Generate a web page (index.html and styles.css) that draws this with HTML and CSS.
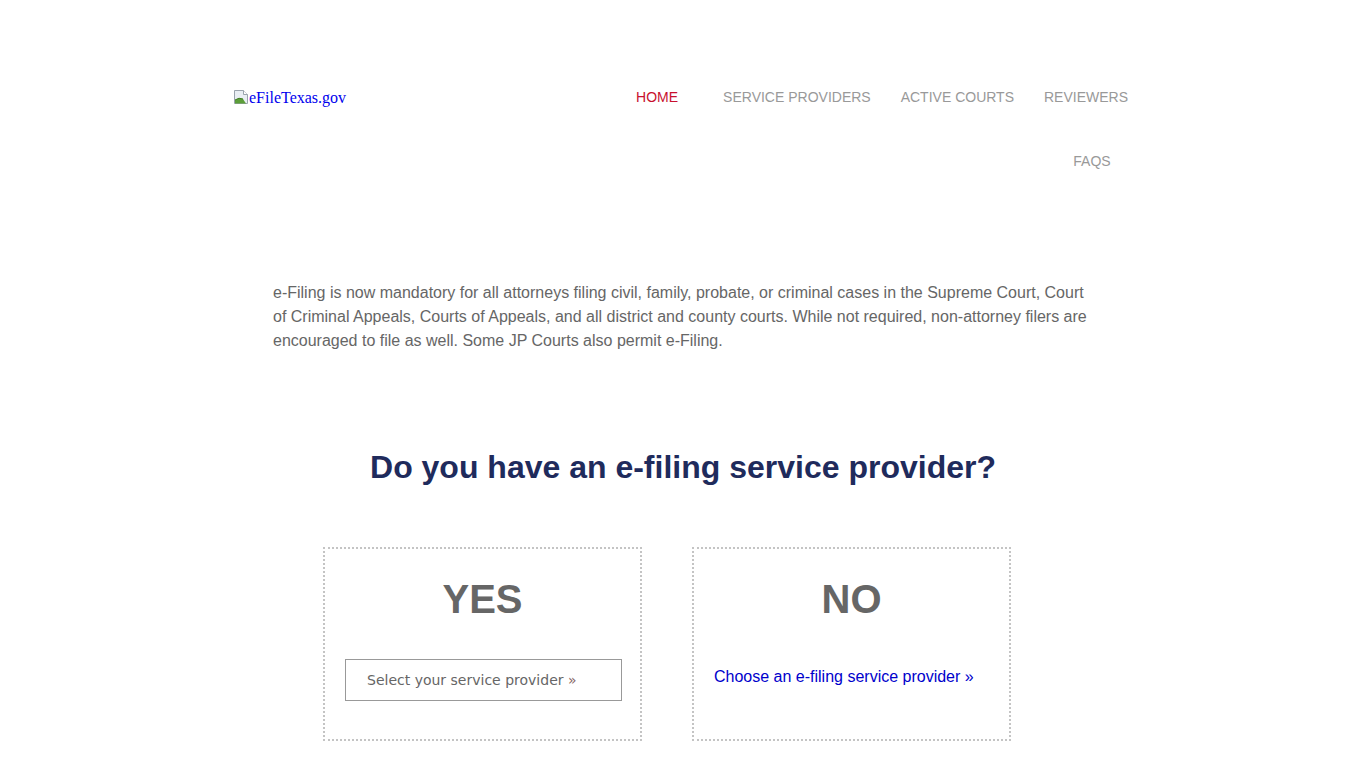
FILE: index.html
```html
<!DOCTYPE html>
<html lang="en">
<head>
<meta charset="utf-8">
<title>eFileTexas.gov</title>
<link rel="stylesheet" href="styles.css">
</head>
<body>
<div class="page">
  <header class="header">
    <a class="logo" href="#">
      <svg class="broken" width="16" height="16" viewBox="0 0 16 16" aria-hidden="true">
        <path d="M1.5 1.5h9l4 4v9h-13z" fill="#e9eef3" stroke="#9aa3ad"/>
        <path d="M10.5 1.5v4h4" fill="#fff" stroke="#9aa3ad"/>
        <path d="M2 14.5 L2 11 Q6 8 10 10 L13 14.5 Z" fill="#5c9e3a"/>
        <path d="M2 11 Q6 8 10 10" fill="none" stroke="#3f7d22"/>
      </svg><span>eFileTexas.gov</span>
    </a>
    <nav class="nav">
      <a class="nav-item active" href="#">HOME</a>
      <a class="nav-item" href="#">SERVICE PROVIDERS</a>
      <a class="nav-item" href="#">ACTIVE COURTS</a>
      <a class="nav-item" href="#">REVIEWERS</a>
      <a class="nav-item" href="#">FAQS</a>
    </nav>
  </header>

  <p class="intro">e-Filing is now mandatory for all attorneys filing civil, family, probate, or criminal cases in the Supreme Court, Court of Criminal Appeals, Courts of Appeals, and all district and county courts. While not required, non-attorney filers are encouraged to file as well. Some JP Courts also permit e-Filing.</p>

  <h1 class="question">Do you have an e-filing service provider?</h1>

  <div class="choices">
    <div class="choice">
      <h2 class="choice-title">YES</h2>
      <a class="select-btn" href="#">Select your service provider <span class="raquo">&raquo;</span></a>
    </div>
    <div class="choice">
      <h2 class="choice-title">NO</h2>
      <a class="choose-link" href="#">Choose an e-filing service provider &raquo;</a>
    </div>
  </div>
</div>
</body>
</html>
```

FILE: styles.css
```css
html, body {
  margin: 0;
  padding: 0;
  background: #fff;
}

.page {
  width: 940px;
  margin: 0 auto;
  font-family: "Liberation Sans", Arial, sans-serif;
}

.header {
  display: flex;
  justify-content: space-between;
  align-items: flex-start;
  margin-top: 65px;
  padding: 0 10px 0 20px;
}

.logo {
  display: flex;
  align-items: center;
  height: 66px;
  font-family: "Liberation Serif", "Times New Roman", serif;
  font-size: 16px;
  color: #0000ee;
  text-decoration: none;
}

.broken {
  display: block;
  margin-top: -2px;
}

.nav {
  display: flex;
  flex-wrap: wrap;
  justify-content: flex-end;
  width: 540px;
}

.nav-item {
  box-sizing: border-box;
  min-width: 102px;
  padding: 0 15px;
  line-height: 64px;
  text-align: center;
  font-size: 14px;
  color: #999;
  text-decoration: none;
}

.nav-item.active {
  color: #c8102e;
}

.intro {
  margin: 88px 60px 0;
  font-size: 16px;
  line-height: 24px;
  color: #666;
}

.question {
  margin: 94px 0 0;
  text-align: center;
  font-size: 32px;
  line-height: 40px;
  font-weight: bold;
  color: #1f2b5c;
}

.choices {
  display: flex;
  gap: 50px;
  margin-top: 60px;
  padding-left: 110px;
}

.choice {
  box-sizing: border-box;
  width: 319px;
  border: 2px dotted #c4c4c4;
  padding: 30px 20px 38px;
}

.choice-title {
  margin: 0;
  text-align: center;
  font-size: 40px;
  line-height: 40px;
  font-weight: bold;
  color: #666;
}

.select-btn {
  display: block;
  box-sizing: border-box;
  width: 277px;
  height: 42px;
  margin-top: 40px;
  padding-left: 21px;
  border: 1px solid #999;
  font-family: "DejaVu Sans", Verdana, sans-serif;
  font-size: 14px;
  line-height: 40px;
  color: #666;
  text-decoration: none;
}

.raquo {
  color: #866;
}

.choose-link {
  display: block;
  margin-top: 49px;
  font-size: 16px;
  line-height: 18px;
  color: #0000cc;
  text-decoration: none;
}
```
